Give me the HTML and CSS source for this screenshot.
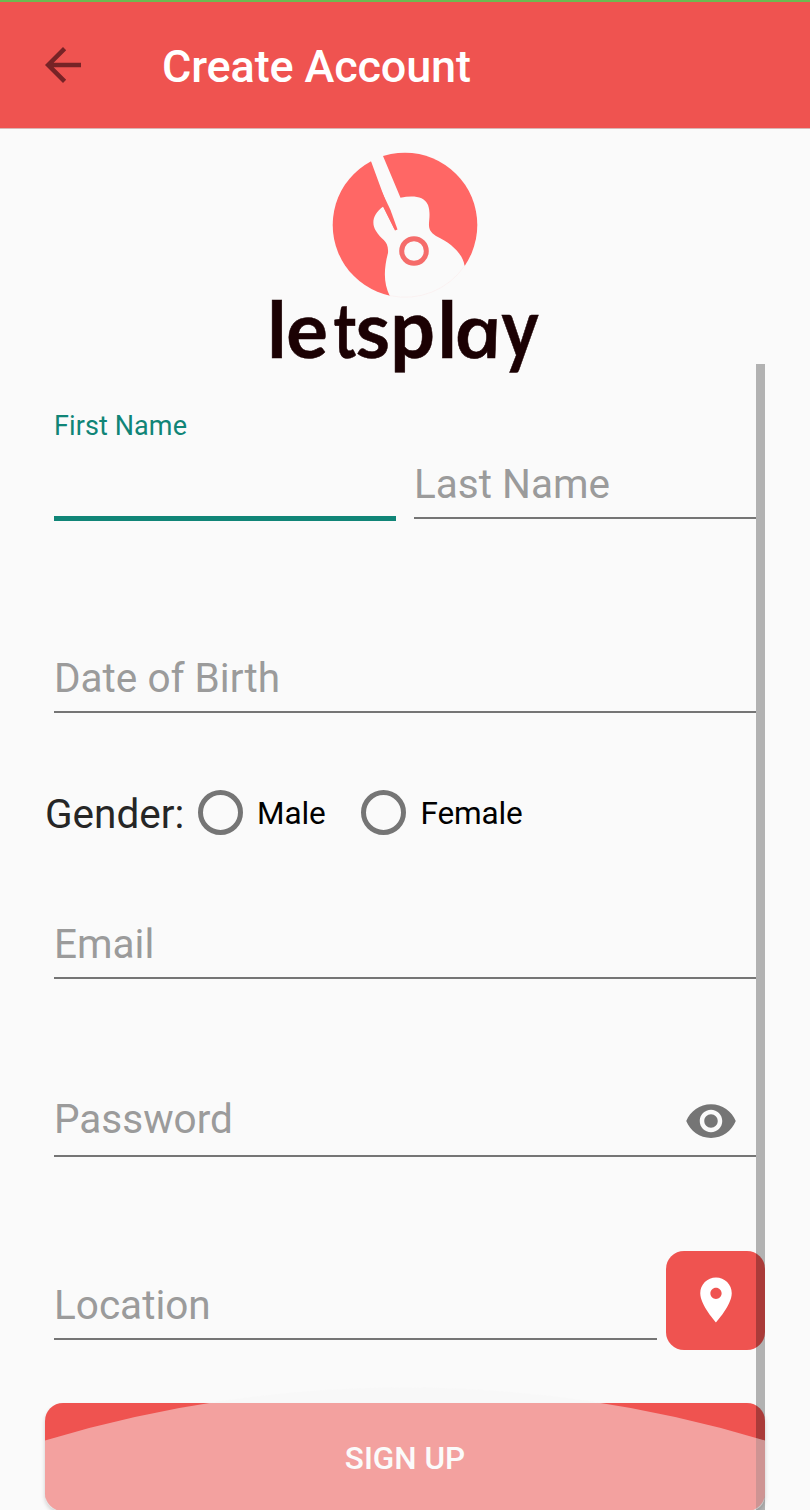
FILE: index.html
```html
<!DOCTYPE html>
<html lang="en">
<head>
<meta charset="utf-8">
<title>Create Account</title>
<link rel="stylesheet" href="styles.css">
</head>
<body>
<div class="screen">
  <header class="appbar">
    <svg class="back" viewBox="0 0 24 24"><path d="M20 11H7.83l5.59-5.59L12 4l-8 8 8 8 1.41-1.41L7.83 13H20v-2z"/></svg>
    <h1 class="title">Create Account</h1>
  </header>
  <main class="content">
    <svg class="logo" viewBox="260 140 290 245">
      <circle cx="405" cy="225" r="72.300" fill="#ff6765"/>
      <path fill="#fafafa" d="M368 154L371.300 162L395.300 227.500Q397 231.500 396.300 230Q394.500 230 393 226L383.300 206.500C373 214 371 223 376 231C381 240 389 240 388 253C384 268 383 283 390 296.500L392 302H440L478 275L464.500 265.500C463 255 453 244 436 236C423 228 433 220 428 205C424 196 413 195.500 400.500 197.700L383 156L380 148Z"/>
      <path fill="#ff6765" d="M382.500 205.500L395 230.500L397.500 229.500L390.500 210L381 190Z"/>
      <path d="M390 295.700A72.300 72.300 0 0 0 464.500 266" fill="none" stroke="#fbeeee" stroke-width=".7"/>
      <circle cx="414" cy="251" r="12.300" fill="none" stroke="#f56c6a" stroke-width="5"/>
      <g class="wordmark">
        <text transform="translate(267.300 358)">l</text>
        <text transform="translate(286.300 358)">e</text>
        <text transform="translate(333.500 358) scale(.78 .98)">t</text>
        <text transform="translate(355.800 358)">s</text>
        <text transform="translate(390.300 358) scale(1.010 1.060)">p</text>
        <text transform="translate(437.500 358)">l</text>
        <text class="slant" transform="translate(457.500 358) skewX(12) scale(1.150 .980)">a</text>
        <text transform="translate(501.500 358) scale(.9 1.080)">y</text>
      </g>
    </svg>
    <form class="form">
      <div class="row names">
        <div class="field focused"><label>First Name</label></div>
        <div class="field"><label>Last Name</label></div>
      </div>
      <div class="field dob"><label>Date of Birth</label></div>
      <div class="row gender">
        <span class="gender-label">Gender:</span>
        <span class="radio"></span><span class="option male">Male</span>
        <span class="radio"></span><span class="option">Female</span>
      </div>
      <div class="field email"><label>Email</label></div>
      <div class="field password"><label>Password</label>
        <svg class="eye" viewBox="0 0 24 24"><path d="M12 4.500C7 4.500 2.730 7.610 1 12c1.730 4.390 6 7.500 11 7.500s9.270-3.110 11-7.500c-1.730-4.390-6-7.500-11-7.500zM12 17c-2.760 0-5-2.240-5-5s2.240-5 5-5 5 2.240 5 5-2.240 5-5 5zm0-8c-1.660 0-3 1.340-3 3s1.340 3 3 3 3-1.340 3-3-1.340-3-3-3z"/></svg>
      </div>
      <div class="row place">
        <div class="field location"><label>Location</label></div>
        <div class="pin"><svg viewBox="0 0 24 24"><path d="M12 2C8.130 2 5 5.130 5 9c0 5.250 7 13 7 13s7-7.750 7-13c0-3.870-3.130-7-7-7zm0 9.500c-1.380 0-2.500-1.120-2.500-2.500s1.120-2.500 2.500-2.500 2.500 1.120 2.500 2.500-1.120 2.500-2.500 2.500z"/></svg></div>
      </div>
      <div class="signup"><span>SIGN UP</span>
        <svg class="ripple" viewBox="45 1380 720 131"><path d="M45 1440.500A1250 1250 0 0 1 765 1440.500V1493Q765 1511 747 1511H63Q45 1511 45 1493Z"/></svg>
      </div>
    </form>
  </main>
  <div class="scrollbar"></div>
</div>
</body>
</html>
```
FILE: styles.css
```css
* { box-sizing: border-box; }
body { margin: 0; background: #fafafa; font-family: Roboto, sans-serif; }
.screen { position: relative; width: 810px; height: 1510px; overflow: hidden; }
.appbar { height: 128px; padding: 0 36px; border-top: 2px solid #6cba50; background: #ef5350; box-shadow: 0 1px 0 #d9b6b5; display: flex; align-items: center; }
.back { width: 54px; height: 54px; fill: #772326; }
.title { margin: 4px 0 0 72px; color: #fff; font-size: 45px; font-weight: 500; line-height: 54px; letter-spacing: -.15px; white-space: nowrap; }
.content { padding-top: 12px; }
.logo { display: block; width: 290px; height: 245px; margin: 0 auto 0 260px; }
.wordmark { fill: #1b0103; stroke: #1b0103; stroke-width: .5px; font: 700 78px Lato, sans-serif; }
.slant { font: italic 600 73px "Open Sans", sans-serif; }
.form { padding: 0 45px; }
.row { display: flex; }
.field { display: flex; margin-left: 9px; align-items: flex-end; border-bottom: 2px solid #757575; color: #9b9b9b; font-size: 40.5px; line-height: 48px; white-space: nowrap; }
.names { padding-right: 9px; gap: 18px; height: 134px; }
.names .field { flex: 1; margin-left: 0; padding-bottom: 9px; }
.names .focused { margin-left: 9px; height: 136px; flex: 0 0 342px; align-items: flex-start; padding-top: 25px; border-bottom: 5px solid #108577; color: #108577; font-size: 27px; line-height: 32px; letter-spacing: .1px; }
.dob { height: 194px; padding-bottom: 9px; margin-right: 9px; }
.gender { height: 90px; margin-top: 55px; align-items: center; }
.gender-label { width: 153px; padding-top: 1px; color: #262626; font-size: 40.5px; }
.radio { width: 45px; height: 45px; margin-bottom: 2px; border: 5px solid #757575; border-radius: 50%; }
.option { margin-left: 14px; color: #000; font-size: 31.5px; letter-spacing: -.1px; }
.male { width: 104.4px; }
.email { height: 121px; padding-bottom: 9px; margin-right: 9px; }
.password { height: 178px; padding-bottom: 12px; margin-right: 9px; justify-content: space-between; }
.eye { width: 54px; height: 54px; margin: 0 18px -5px 0; fill: #757575; }
.place { margin-top: 94px; height: 99px; gap: 9px; }
.location { width: 603px; height: 89px; padding-bottom: 9px; }
.pin { width: 99px; height: 99px; padding-bottom: 1px; border-radius: 18px; background: #ef5350; display: flex; align-items: center; justify-content: center; }
.pin svg { width: 54px; height: 54px; fill: #fff; }
.signup { position: relative; height: 108px; margin-top: 53px; border-radius: 18px; background: #ef5350; box-shadow: 0 3px 4px rgba(0,0,0,.18); display: flex; align-items: center; justify-content: center; color: #fff; font-size: 31.5px; font-weight: 500; }
.signup span { padding-top: 2px; }
.ripple { position: absolute; z-index: 3; left: 0; bottom: 0; width: 720px; height: 131px; fill: rgba(247,247,247,.48); }
.scrollbar { position: absolute; right: 45px; top: 364px; bottom: 0; width: 9px; background: rgba(0,0,0,.285); z-index: 2; }
```
